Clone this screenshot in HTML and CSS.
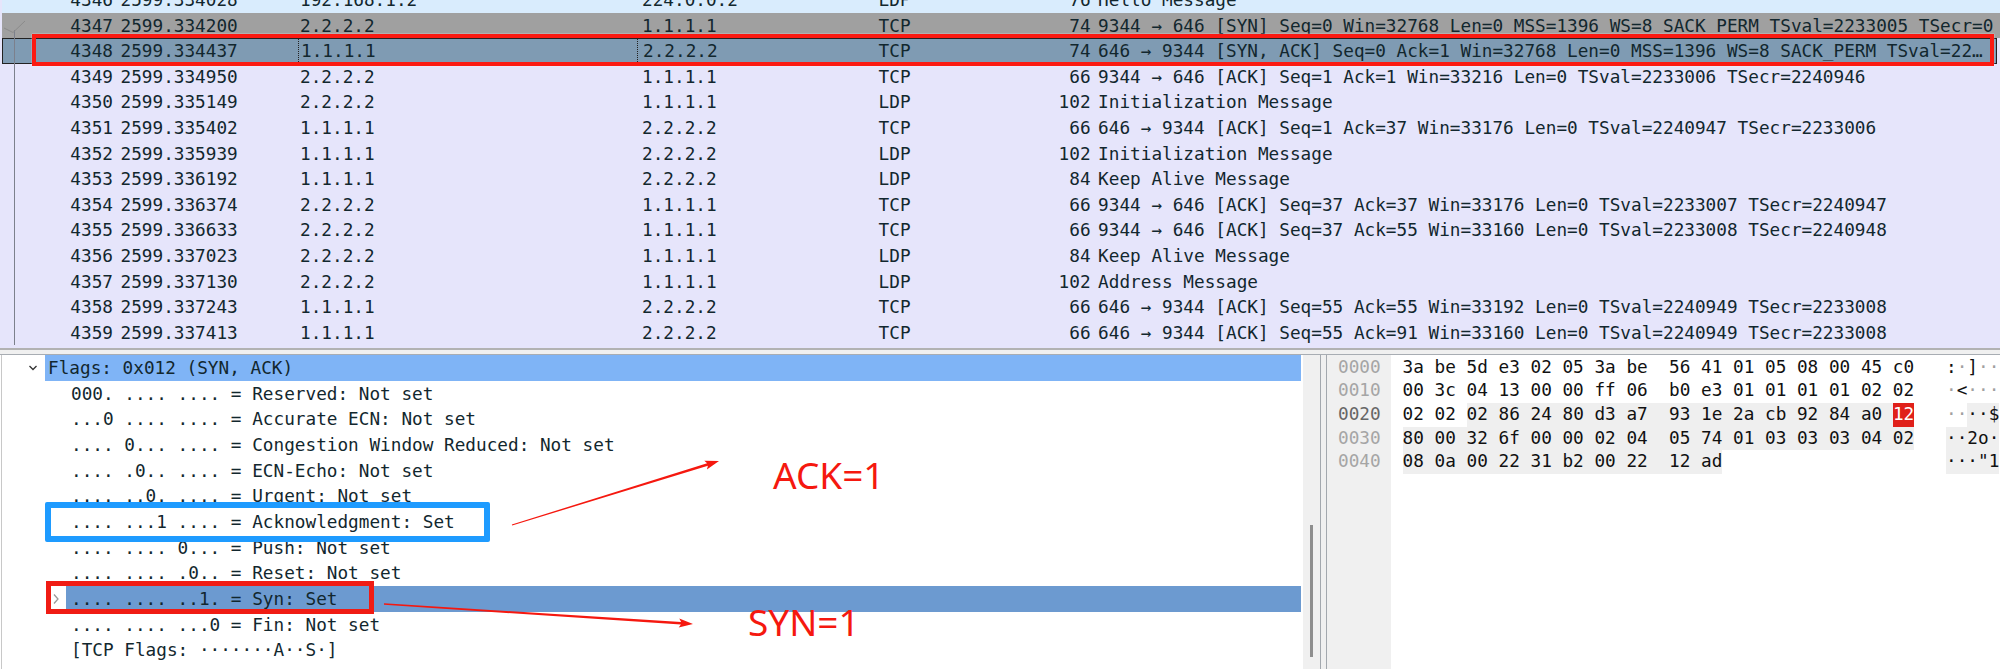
FILE: index.html
```html
<!DOCTYPE html>
<html lang="en">
<head>
<meta charset="utf-8">
<title>TCP handshake capture</title>
<link rel="stylesheet" href="styles.css">
</head>
<body>
<div class="app">
  <section class="packets">
    <div class="row r-top"><span>4346</span><span>2599.334028</span><span>192.168.1.2</span><span>224.0.0.2</span><span>LDP</span><span>76</span><span>Hello Message</span></div>
    <div class="row r-gray"><span>4347</span><span>2599.334200</span><span>2.2.2.2</span><span>1.1.1.1</span><span>TCP</span><span>74</span><span>9344 → 646 [SYN] Seq=0 Win=32768 Len=0 MSS=1396 WS=8 SACK_PERM TSval=2233005 TSecr=0</span></div>
    <div class="row r-sel"><span>4348</span><span>2599.334437</span><span>1.1.1.1</span><span>2.2.2.2</span><span>TCP</span><span>74</span><span>646 → 9344 [SYN, ACK] Seq=0 Ack=1 Win=32768 Len=0 MSS=1396 WS=8 SACK_PERM TSval=22…</span></div>
    <div class="row"><span>4349</span><span>2599.334950</span><span>2.2.2.2</span><span>1.1.1.1</span><span>TCP</span><span>66</span><span>9344 → 646 [ACK] Seq=1 Ack=1 Win=33216 Len=0 TSval=2233006 TSecr=2240946</span></div>
    <div class="row"><span>4350</span><span>2599.335149</span><span>2.2.2.2</span><span>1.1.1.1</span><span>LDP</span><span>102</span><span>Initialization Message</span></div>
    <div class="row"><span>4351</span><span>2599.335402</span><span>1.1.1.1</span><span>2.2.2.2</span><span>TCP</span><span>66</span><span>646 → 9344 [ACK] Seq=1 Ack=37 Win=33176 Len=0 TSval=2240947 TSecr=2233006</span></div>
    <div class="row"><span>4352</span><span>2599.335939</span><span>1.1.1.1</span><span>2.2.2.2</span><span>LDP</span><span>102</span><span>Initialization Message</span></div>
    <div class="row"><span>4353</span><span>2599.336192</span><span>1.1.1.1</span><span>2.2.2.2</span><span>LDP</span><span>84</span><span>Keep Alive Message</span></div>
    <div class="row"><span>4354</span><span>2599.336374</span><span>2.2.2.2</span><span>1.1.1.1</span><span>TCP</span><span>66</span><span>9344 → 646 [ACK] Seq=37 Ack=37 Win=33176 Len=0 TSval=2233007 TSecr=2240947</span></div>
    <div class="row"><span>4355</span><span>2599.336633</span><span>2.2.2.2</span><span>1.1.1.1</span><span>TCP</span><span>66</span><span>9344 → 646 [ACK] Seq=37 Ack=55 Win=33160 Len=0 TSval=2233008 TSecr=2240948</span></div>
    <div class="row"><span>4356</span><span>2599.337023</span><span>2.2.2.2</span><span>1.1.1.1</span><span>LDP</span><span>84</span><span>Keep Alive Message</span></div>
    <div class="row"><span>4357</span><span>2599.337130</span><span>2.2.2.2</span><span>1.1.1.1</span><span>LDP</span><span>102</span><span>Address Message</span></div>
    <div class="row"><span>4358</span><span>2599.337243</span><span>1.1.1.1</span><span>2.2.2.2</span><span>TCP</span><span>66</span><span>646 → 9344 [ACK] Seq=55 Ack=55 Win=33192 Len=0 TSval=2240949 TSecr=2233008</span></div>
    <div class="row"><span>4359</span><span>2599.337413</span><span>1.1.1.1</span><span>2.2.2.2</span><span>TCP</span><span>66</span><span>646 → 9344 [ACK] Seq=55 Ack=91 Win=33160 Len=0 TSval=2240949 TSecr=2233008</span></div>
  </section>
  <div class="splitter"></div>
  <section class="lower">
    <div class="tree">
      <div class="node root"><span class="twisty"><svg width="10" height="8" viewBox="0 0 10 8"><polyline points="1.5,2 5,5.5 8.5,2" fill="none" stroke="#333" stroke-width="1.3"/></svg></span><span class="label">Flags: 0x012 (SYN, ACK)</span></div>
      <div class="node"><span class="twisty"></span><span class="label">000. .... .... = Reserved: Not set</span></div>
      <div class="node"><span class="twisty"></span><span class="label">...0 .... .... = Accurate ECN: Not set</span></div>
      <div class="node"><span class="twisty"></span><span class="label">.... 0... .... = Congestion Window Reduced: Not set</span></div>
      <div class="node"><span class="twisty"></span><span class="label">.... .0.. .... = ECN-Echo: Not set</span></div>
      <div class="node"><span class="twisty"></span><span class="label">.... ..0. .... = Urgent: Not set</span></div>
      <div class="node"><span class="twisty"></span><span class="label">.... ...1 .... = Acknowledgment: Set</span></div>
      <div class="node"><span class="twisty"></span><span class="label">.... .... 0... = Push: Not set</span></div>
      <div class="node"><span class="twisty"></span><span class="label">.... .... .0.. = Reset: Not set</span></div>
      <div class="node syn"><span class="twisty"><svg width="8" height="12" viewBox="0 0 8 12"><polyline points="2,1.5 6,6 2,10.5" fill="none" stroke="#999" stroke-width="1.3"/></svg></span><span class="label">.... .... ..1. = Syn: Set</span></div>
      <div class="node"><span class="twisty"></span><span class="label">.... .... ...0 = Fin: Not set</span></div>
      <div class="node"><span class="twisty"></span><span class="label">[TCP Flags: ·······A··S·]</span></div>
    </div>
    <div class="scroll"><div class="thumb"></div></div>
    <div class="gutter"></div>
    <div class="hex">
      <div class="offsets">
        <div class="line">0000</div>
        <div class="line">0010</div>
        <div class="line cur">0020</div>
        <div class="line">0030</div>
        <div class="line">0040</div>
      </div>
      <div class="bytes">
        <div class="line">3a be 5d e3 02 05 3a be  56 41 01 05 08 00 45 c0</div>
        <div class="line">00 3c 04 13 00 00 ff 06  b0 e3 01 01 01 01 02 02</div>
        <div class="line">02 02 <span class="hl">02 86 24 80 d3 a7  93 1e 2a cb 92 84 a0 </span><span class="hit">12</span></div>
        <div class="line"><span class="hl">80 00 32 6f 00 00 02 04  05 74 01 03 03 03 04 02</span></div>
        <div class="line"><span class="hl">08 0a 00 22 31 b2 00 22  12 ad</span></div>
      </div>
      <div class="ascii">
        <div class="line">:<i>·</i>]<i>··</i></div>
        <div class="line"><i>·</i>&lt;<i>···</i></div>
        <div class="line"><i>··</i><span class="hl">··$</span></div>
        <div class="line"><span class="hl">··2o·</span></div>
        <div class="line"><span class="hl">···"1</span></div>
      </div>
    </div>
  </section>
  <div class="mark red-row"></div>
  <div class="mark blue-box"></div>
  <div class="mark red-syn"></div>
  <svg class="arrows" width="2000" height="669" viewBox="0 0 2000 669">
    <polyline points="4,28 13,32.5 25,21" fill="none" stroke="#8b8b8b" stroke-width="1"/>
    <polygon fill="#f5180f" points="511.85,524.5 707.1,463.3 704.3,460.8 719,461 706.9,469.4 707.9,465.7 512.15,525.5"/>
    <polygon fill="#f5180f" points="384,603.2 681.1,621.9 679.3,618.6 693,624 678.7,627.6 680.9,624.5 384,604.8"/>
  </svg>
  <div class="note note-ack">ACK=1</div>
  <div class="note note-syn">SYN=1</div>
</div>
</body>
</html>
```
FILE: styles.css
```css
* { box-sizing: border-box; }
html, body { margin: 0; padding: 0; background: #fff; }
.app {
  position: relative;
  width: 2000px;
  height: 669px;
  overflow: hidden;
  display: flex;
  flex-direction: column;
  font-family: "DejaVu Sans Mono", "Liberation Mono", monospace;
  font-size: 17.72px;
  color: #12272e;
}
.packets {
  position: relative;
  flex: none;
  margin-top: -13px;
  padding: 0 0 2.5px 2px;
  background: #e6e5fb;
}
.packets::after {
  content: "";
  position: absolute;
  left: 14px;
  top: 43px;
  bottom: 2.5px;
  width: 1px;
  background: #7c808c;
}
.row {
  display: grid;
  grid-template-columns: 111px 185px 339px 241.6px 100px 112px 1fr;
  height: 25.6px;
  line-height: 26.2px;
  white-space: pre;
}
.row span:nth-child(1), .row span:nth-child(6) { text-align: right; }
.row span:nth-child(2), .row span:nth-child(7) { padding-left: 7.5px; }
.row span:nth-child(3) { padding-left: 2px; }
.row span:nth-child(4) { padding-left: 5px; }
.r-top { background: #d9ecfd; }
.r-gray { background: #a0a0a0; }
.r-sel {
  background: #7f9bb3;
  box-shadow: inset 0 0 0 1px #222;
  margin-right: 3px;
}
.r-sel span:nth-child(3), .r-sel span:nth-child(4) { border-left: 1px dotted #222; }
.splitter {
  flex: none;
  height: 7px;
  background: #f0f0f0;
  border-top: 2px solid #b2b2b2;
  border-bottom: 1px solid #a8adb3;
}
.lower { flex: 1; display: flex; min-height: 0; }
.tree {
  width: 1302px;
  flex: none;
  padding-right: 2px;
  border-left: 1px solid #c8c8c8;
  margin-left: 1px;
}
.node { display: flex; height: 25.7px; line-height: 27.2px; white-space: pre; }
.twisty {
  flex: none;
  width: 64px;
  display: flex;
  align-items: center;
  justify-content: flex-end;
  padding-right: 6px;
}
.label { flex: 1; padding-left: 5px; }
.root .twisty { width: 43px; padding-right: 7px; }
.root .label { padding-left: 3px; background: #7fb4f6; }
.syn .label { background: #6c9ad0; }
.scroll {
  flex: none;
  width: 18px;
  position: relative;
  background: #f0f0f0;
  border-right: 1px solid #a3a8ae;
}
.thumb {
  position: absolute;
  left: 7px;
  top: 170px;
  width: 2.5px;
  height: 132px;
  background: #8e8e8e;
}
.gutter { flex: none; width: 5px; background: #f0f0f0; }
.hex { flex: 1; display: flex; border-left: 1px solid #a3a8ae; min-width: 0; }
.line { height: 23.6px; line-height: 23.6px; white-space: pre; }
.offsets {
  flex: none;
  width: 64px;
  padding: 1px 0 0 11px;
  background: #f0f0f0;
  color: #a5a5a5;
}
.offsets .cur { color: #666; }
.bytes { flex: none; width: 555px; padding: 1px 0 0 11.6px; color: #111; }
.ascii { flex: 1; padding-top: 1px; overflow: hidden; color: #111; }
.ascii i { font-style: normal; color: #a0a0a0; }
.hl { display: inline-block; background: #efefef; height: 23.6px; }
.hit { display: inline-block; background: #e0201a; color: #fff; height: 23.6px; }
.mark { position: absolute; }
.red-row {
  left: 32px;
  top: 34px;
  width: 1962px;
  height: 32px;
  border: 4.5px solid #fb1a12;
  box-shadow: 0 0 1px #fff;
}
.blue-box {
  left: 45px;
  top: 502px;
  width: 445px;
  height: 40px;
  border: 6px solid #1e9bff;
  border-radius: 2px;
}
.red-syn {
  left: 46px;
  top: 581px;
  width: 328px;
  height: 33px;
  border: 5.5px solid #f01c14;
}
.arrows { position: absolute; left: 0; top: 0; pointer-events: none; }
.note {
  position: absolute;
  font-family: "Noto Sans", sans-serif;
  font-size: 37px;
  line-height: 44px;
  color: #f5180f;
  white-space: pre;
}
.note-ack { left: 773px; top: 453px; }
.note-syn { left: 748px; top: 600px; }
```
